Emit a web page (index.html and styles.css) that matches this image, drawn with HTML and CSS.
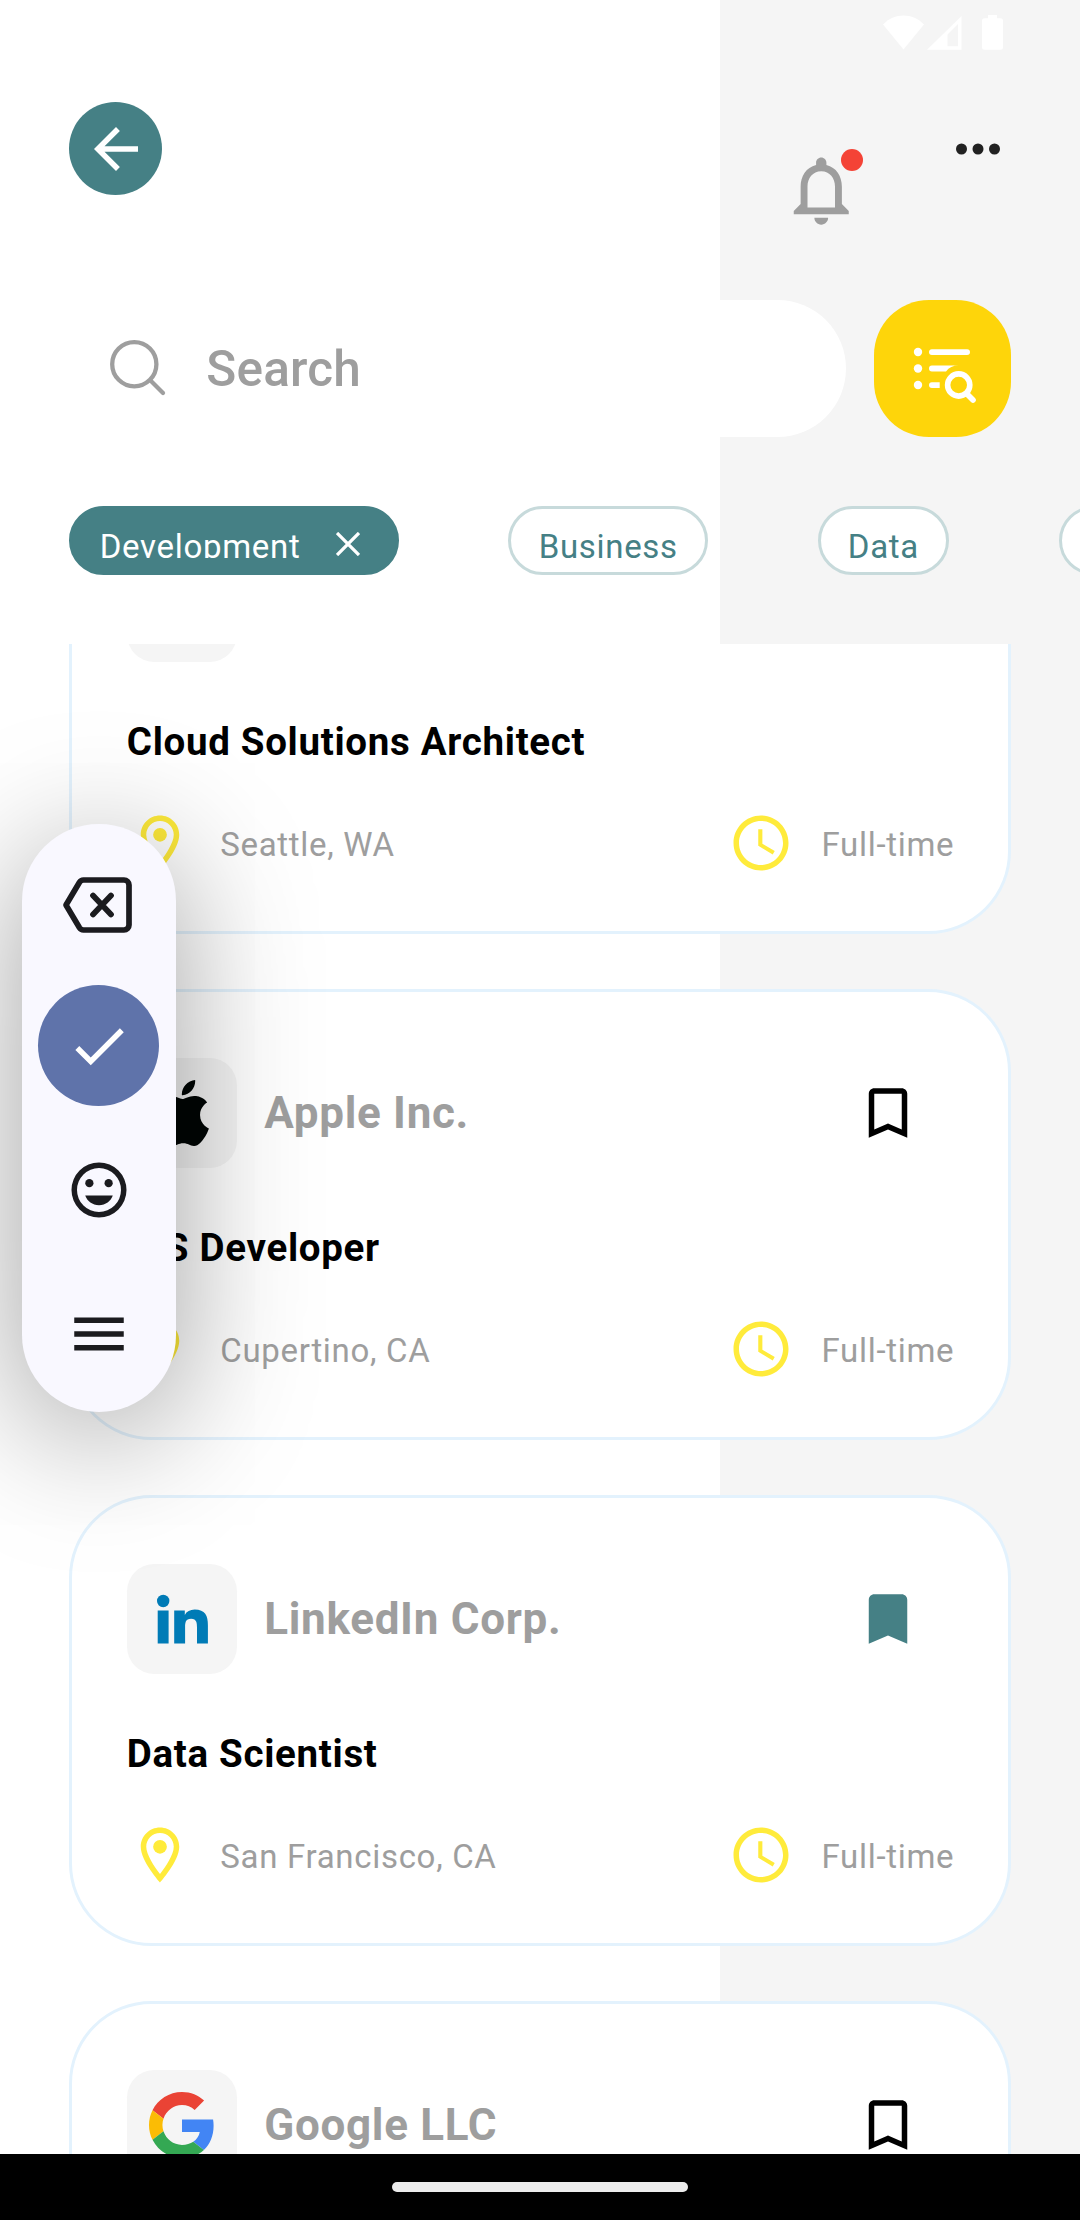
FILE: index.html
```html
<!DOCTYPE html>
<html lang="en">
<head>
<meta charset="utf-8">
<title>Job search</title>
<link rel="stylesheet" href="styles.css">
</head>
<body>
<svg class="defs" width="0" height="0">
  <symbol id="pin" viewBox="0 0 24 24"><path d="M12 2C8.13 2 5 5.13 5 9c0 5.25 7 13 7 13s7-7.75 7-13c0-3.87-3.13-7-7-7zM7 9c0-2.76 2.24-5 5-5s5 2.24 5 5c0 2.88-2.88 7.19-5 9.88C9.92 16.21 7 11.85 7 9z"/><circle cx="12" cy="9" r="2.5"/></symbol>
  <symbol id="clock" viewBox="0 0 24 24"><path d="M11.99 2C6.47 2 2 6.48 2 12s4.47 10 9.99 10C17.52 22 22 17.52 22 12S17.52 2 11.99 2zM12 20c-4.42 0-8-3.58-8-8s3.58-8 8-8 8 3.58 8 8-3.58 8-8 8zm.5-13H11v6l5.25 3.15.75-1.23-4.5-2.67z"/></symbol>
  <symbol id="mark" viewBox="0 0 24 24"><path d="M17 3H7c-1.1 0-1.99.9-1.99 2L5 21l7-3 7 3V5c0-1.1-.9-2-2-2zm0 15l-5-2.18L7 18V5h10v13z"/></symbol>
  <symbol id="mark-full" viewBox="0 0 24 24"><path d="M17 3H7c-1.1 0-1.99.9-1.99 2L5 21l7-3 7 3V5c0-1.1-.9-2-2-2z"/></symbol>
</svg>
<div class="screen">
  <div class="status">
    <svg width="41" height="35" viewBox="0 0 41 35"><path d="M0 9.500C5.500 3.500 13 .500 20.500 .500S35.500 3.500 41 9.500L20.500 34.500z"/></svg>
    <svg class="signal" width="35" height="35" viewBox="0 0 35 35"><path fill-rule="evenodd" d="M0 34.700L34.500 1V34.700zM20.500 19.500V31.200H31V9z"/></svg>
    <svg class="battery" width="21" height="35" viewBox="0 0 21 35"><path d="M6 0h9v3.300h3.500a2.500 2.500 0 0 1 2.500 2.500v26.400a2.500 2.500 0 0 1-2.500 2.500h-16a2.500 2.500 0 0 1-2.500-2.500V5.800a2.500 2.500 0 0 1 2.500-2.500H6z"/></svg>
  </div>

  <header class="topbar">
    <button class="back"><svg class="ic" viewBox="0 0 24 24"><path d="M20 11H7.830l5.590-5.590L12 4l-8 8 8 8 1.410-1.410L7.830 13H20v-2z"/></svg></button>
    <div class="bell">
      <svg viewBox="0 0 24 24"><path d="M12 22c1.100 0 2-.900 2-2h-4c0 1.100.900 2 2 2zm6-6v-5c0-3.070-1.630-5.640-4.500-6.320V4c0-.830-.670-1.500-1.500-1.500s-1.500.670-1.500 1.500v.680C7.640 5.360 6 7.920 6 11v5l-2 2v1h16v-1l-2-2zm-2 1H8v-6c0-2.480 1.510-4.500 4-4.500s4 2.020 4 4.500v6z"/></svg>
      <span class="badge"></span>
    </div>
    <svg class="ic more" viewBox="0 0 24 24"><circle cx="6" cy="12" r="2"/><circle cx="12" cy="12" r="2"/><circle cx="18" cy="12" r="2"/></svg>
  </header>

  <div class="search-row">
    <div class="search">
      <svg width="58" height="58" viewBox="0 0 58 58"><circle cx="25.300" cy="25.200" r="22.100"/><path d="M41.500 41.500L54 54"/></svg>
      <span>Search</span>
    </div>
    <button class="filter">
      <svg width="64" height="56" viewBox="0 0 64 56">
        <g fill="#fff"><circle cx="5" cy="5" r="4.200"/><circle cx="5" cy="21.500" r="4.200"/><circle cx="5" cy="38" r="4.200"/>
        <rect x="16" y="2.200" width="41" height="5.800" rx="2.900"/>
        <path d="M18.900 18.600H45.500C40 18.600 36 20.500 33 24.400H18.900a2.900 2.900 0 0 1 0-5.800zM18.900 35.200H26.700v5.800H18.900a2.900 2.900 0 0 1 0-5.800z"/></g>
        <g fill="none" stroke="#fff" stroke-width="5.600"><circle cx="45.700" cy="38" r="11.100"/><path d="M53.500 46.500L60 53" stroke-linecap="round"/></g>
      </svg>
    </button>
  </div>

  <nav class="chips">
    <div class="chip active"><span class="clip">Development</span><svg width="24" height="24" viewBox="0 0 24 24"><path d="M1 1L23 23M23 1L1 23"/></svg></div>
    <div class="chip"><span>Business</span></div>
    <div class="chip"><span>Data</span></div>
    <div class="chip"></div>
  </nav>

  <main class="list">
    <article class="card first">
      <div class="head"><div class="tile"></div></div>
      <h2>Cloud Solutions Architect</h2>
      <div class="meta"><svg class="ic"><use href="#pin"/></svg><span class="place">Seattle, WA</span><svg class="ic"><use href="#clock"/></svg><span>Full-time</span></div>
    </article>
    <article class="card">
      <div class="head">
        <div class="tile"><svg class="ic" viewBox="0 0 24 24"><path fill="#000504" d="M12.152 6.896c-.948 0-2.415-1.078-3.960-1.040-2.040.027-3.910 1.183-4.961 3.014-2.117 3.675-.546 9.103 1.519 12.090 1.013 1.454 2.208 3.090 3.792 3.039 1.520-.065 2.090-.987 3.935-.987 1.831 0 2.350.987 3.960.948 1.637-.026 2.676-1.480 3.676-2.948 1.156-1.688 1.636-3.325 1.662-3.415-.039-.013-3.182-1.221-3.220-4.857-.026-3.040 2.480-4.494 2.597-4.559-1.429-2.090-3.623-2.324-4.390-2.376-2-.156-3.675 1.090-4.610 1.090zM15.530 3.830c.843-1.012 1.400-2.427 1.245-3.830-1.207.052-2.662.805-3.532 1.818-.780.896-1.454 2.338-1.273 3.714 1.338.104 2.715-.688 3.559-1.701z"/></svg></div>
        <span class="company">Apple Inc.</span><svg class="ic bookmark"><use href="#mark"/></svg>
      </div>
      <h2>iOS Developer</h2>
      <div class="meta"><svg class="ic"><use href="#pin"/></svg><span class="place">Cupertino, CA</span><svg class="ic"><use href="#clock"/></svg><span>Full-time</span></div>
    </article>
    <article class="card">
      <div class="head">
        <div class="tile"><svg width="52" height="52" viewBox="0 0 52 52" fill="#007bb6"><circle cx="7.200" cy="8" r="6.200"/><path d="M1.700 17.500h10.900v33H1.700zM18.200 17.500h10.600v4.400c1.800-3.200 5.300-5.300 9.800-5.300 10.700 0 13.300 6.400 13.300 15.600v18.300H41V34.300c0-4-.2-8.600-5.900-8.600s-6 4.200-6 8.400v16.400H18.200z"/></svg></div>
        <span class="company">LinkedIn Corp.</span><svg class="ic bookmark saved"><use href="#mark-full"/></svg>
      </div>
      <h2>Data Scientist</h2>
      <div class="meta"><svg class="ic"><use href="#pin"/></svg><span class="place">San Francisco, CA</span><svg class="ic"><use href="#clock"/></svg><span>Full-time</span></div>
    </article>
    <article class="card">
      <div class="head">
        <div class="tile"><svg class="ic" viewBox="0 0 48 48"><path fill="#EA4335" d="M24 9.500c3.540 0 6.710 1.220 9.210 3.600l6.850-6.850C35.900 2.380 30.470 0 24 0 14.620 0 6.510 5.380 2.560 13.220l7.980 6.190C12.430 13.720 17.740 9.500 24 9.500z"/><path fill="#4285F4" d="M46.980 24.550c0-1.570-.150-3.090-.380-4.550H24v9.020h12.940c-.580 2.960-2.260 5.480-4.780 7.180l7.730 6c4.510-4.180 7.090-10.360 7.090-17.650z"/><path fill="#FBBC05" d="M10.530 28.590c-.480-1.450-.760-2.990-.760-4.590s.270-3.140.760-4.590l-7.980-6.190C.920 16.460 0 20.120 0 24c0 3.880.920 7.540 2.560 10.780l7.970-6.190z"/><path fill="#34A853" d="M24 48c6.480 0 11.930-2.130 15.890-5.810l-7.730-6c-2.150 1.450-4.920 2.300-8.160 2.300-6.260 0-11.570-4.220-13.470-9.910l-7.980 6.190C6.510 42.620 14.620 48 24 48z"/></svg></div>
        <span class="company">Google LLC</span><svg class="ic bookmark"><use href="#mark"/></svg>
      </div>
    </article>
  </main>

  <footer class="gesture"><span></span></footer>

  <aside class="tools">
    <div class="tool erase"><svg width="72" height="58" viewBox="0 0 72 58" fill="none" stroke="#1b1b1f" stroke-width="5.700" stroke-linecap="round" stroke-linejoin="round"><path d="M21.500 4H62a5 5 0 0 1 5 5v40a5 5 0 0 1-5 5H21.500a5 5 0 0 1-4-2.300L4 29 17.500 6.300a5 5 0 0 1 4-2.300zM31 19.500L49 38.500M49 19.500L31 38.500"/></svg></div>
    <div class="tool ok"><svg class="ic" viewBox="0 0 24 24"><path d="M9 16.170L4.830 12l-1.420 1.410L9 19 21 7l-1.410-1.410z"/></svg></div>
    <div class="tool"><svg class="ic" viewBox="0 0 24 24"><path fill-rule="evenodd" d="M12 2a10 10 0 1 0 0 20 10 10 0 0 0 0-20zm0 18a8 8 0 1 1 0-16 8 8 0 0 1 0 16z"/><circle cx="8.500" cy="9.500" r="1.500"/><circle cx="15.500" cy="9.500" r="1.500"/><path d="M7 14h10c-.7 2.100-2.600 3.500-5 3.500S7.700 16.100 7 14z"/></svg></div>
    <div class="tool menu"><svg class="ic" viewBox="0 0 24 24"><path d="M3 6h18v2H3zM3 11h18v2H3zM3 16h18v2H3z"/></svg></div>
  </aside>
</div>
</body>
</html>
```

FILE: styles.css
```css
* { box-sizing: border-box; }
body { margin: 0; }
.defs { position: absolute; }
svg { display: block; flex: none; }
.ic { width: 66px; height: 66px; }
button { border: 0; padding: 0; }

.screen {
  position: relative;
  width: 1080px;
  height: 2220px;
  overflow: hidden;
  display: flex;
  flex-direction: column;
  background: linear-gradient(90deg, #fff 720px, #f5f5f5 720px);
  font-family: Roboto, "Liberation Sans", sans-serif;
  letter-spacing: .69px;
}

.status {
  height: 101.500px;
  flex: none;
  display: flex;
  justify-content: flex-end;
  padding: 15px 77px 0 0;
  fill: #fff;
}
.signal { margin-left: 3px; }
.battery { margin-left: 20px; }

.topbar {
  height: 198px;
  flex: none;
  display: flex;
  padding: 0 68.750px;
}
.back {
  width: 93.500px;
  height: 93.500px;
  padding-top: 1px;
  border-radius: 50%;
  background: #458085;
  fill: #fff;
  display: grid;
  place-items: center;
}
.bell {
  position: relative;
  width: 82.500px;
  height: 82.500px;
  margin: 47px 82.500px 0 auto;
  fill: #9e9e9e;
}
.badge {
  position: absolute;
  top: 0;
  left: 60.500px;
  width: 22px;
  height: 22px;
  border-radius: 50%;
  background: #f44336;
}
.more { margin-top: 14.500px; fill: #212121; }

.search-row {
  height: 137.500px;
  flex: none;
  display: flex;
  gap: 27.500px;
  padding: 0 68.750px;
}
.search {
  flex: 1;
  display: flex;
  align-items: center;
  gap: 39.500px;
  padding-left: 40px;
  border-radius: 69px;
  background: #fff;
  color: #9e9e9e;
  font-size: 49.500px;
  font-weight: 500;
  letter-spacing: .2px;
}
.search span { padding-top: 2px; }
.search svg { fill: none; stroke: #9e9e9e; stroke-width: 4.300px; stroke-linecap: round; }
.filter {
  width: 137.500px;
  border-radius: 55px;
  background: #fed50a;
  display: grid;
  place-items: center;
  padding: 13.500px 0 0 5px;
}

.chips {
  height: 207px;
  flex: none;
  display: flex;
  align-items: flex-start;
  gap: 109.500px;
  padding: 69px 0 0 68.750px;
}
.chip {
  flex: none;
  min-width: 130px;
  height: 69px;
  display: flex;
  padding: 18px 27.250px 0;
  border: 3px solid #c7dadb;
  border-radius: 35px;
  background: #fff;
  color: #458085;
  font-size: 33px;
  line-height: 39px;
}
.chip.active { background: #458085; border-color: #458085; color: #fff; padding-left: 28px; padding-right: 35.500px; }
.clip { height: 31px; overflow: hidden; }
.chip svg { margin: 5px 0 0 36px; fill: none; stroke: #fff; stroke-width: 3.300px; }

.list {
  height: 1510px;
  flex: none;
  overflow: hidden;
  display: flex;
  flex-direction: column;
  gap: 55px;
  padding: 0 68.750px;
}
.card {
  flex: none;
  height: 451px;
  padding: 66px 54px 0 55px;
  border: 3px solid #e3f2fd;
  border-radius: 82.500px;
  background: #fff;
}
.first { margin-top: -161px; }
.head { height: 110px; display: flex; align-items: center; }
.tile {
  width: 110px;
  height: 110px;
  border-radius: 27.500px;
  background: #f5f5f5;
  display: grid;
  place-items: center;
}
.company { margin-left: 27.500px; color: #9e9e9e; font-size: 44px; font-weight: 700; }
.bookmark { margin: 0 33px 0 auto; }
.saved { fill: #458085; }
h2 { margin: 57px 0 44.500px; font-size: 38.500px; line-height: 46px; font-weight: 700; color: #000; }
.meta { display: flex; align-items: center; fill: #ffeb3b; color: #9e9e9e; font-size: 33px; }
.meta span { margin-left: 27.500px; padding-top: 4px; }
.meta .place { margin-right: auto; }

.gesture { flex: 1; background: #000; display: flex; justify-content: center; padding-top: 28px; }
.gesture span { width: 296px; height: 10px; border-radius: 5px; background: #ececec; }

.tools {
  position: absolute;
  left: 22px;
  top: 824px;
  width: 154px;
  height: 588px;
  padding: 24px 1px 0 0;
  border-radius: 77px;
  background: #f9f8ff;
  box-shadow: 0 24px 136px rgba(0, 0, 0, .38);
  display: flex;
  flex-direction: column;
  align-items: center;
  gap: 23.500px;
  fill: #1b1b1f;
}
.tool { flex: none; width: 121px; height: 121px; border-radius: 50%; display: grid; place-items: center; }
.erase { height: 113.500px; padding-right: 1px; }
.menu { padding-bottom: 2px; }
.ok { background: #5f73aa; fill: #fff; }
```
